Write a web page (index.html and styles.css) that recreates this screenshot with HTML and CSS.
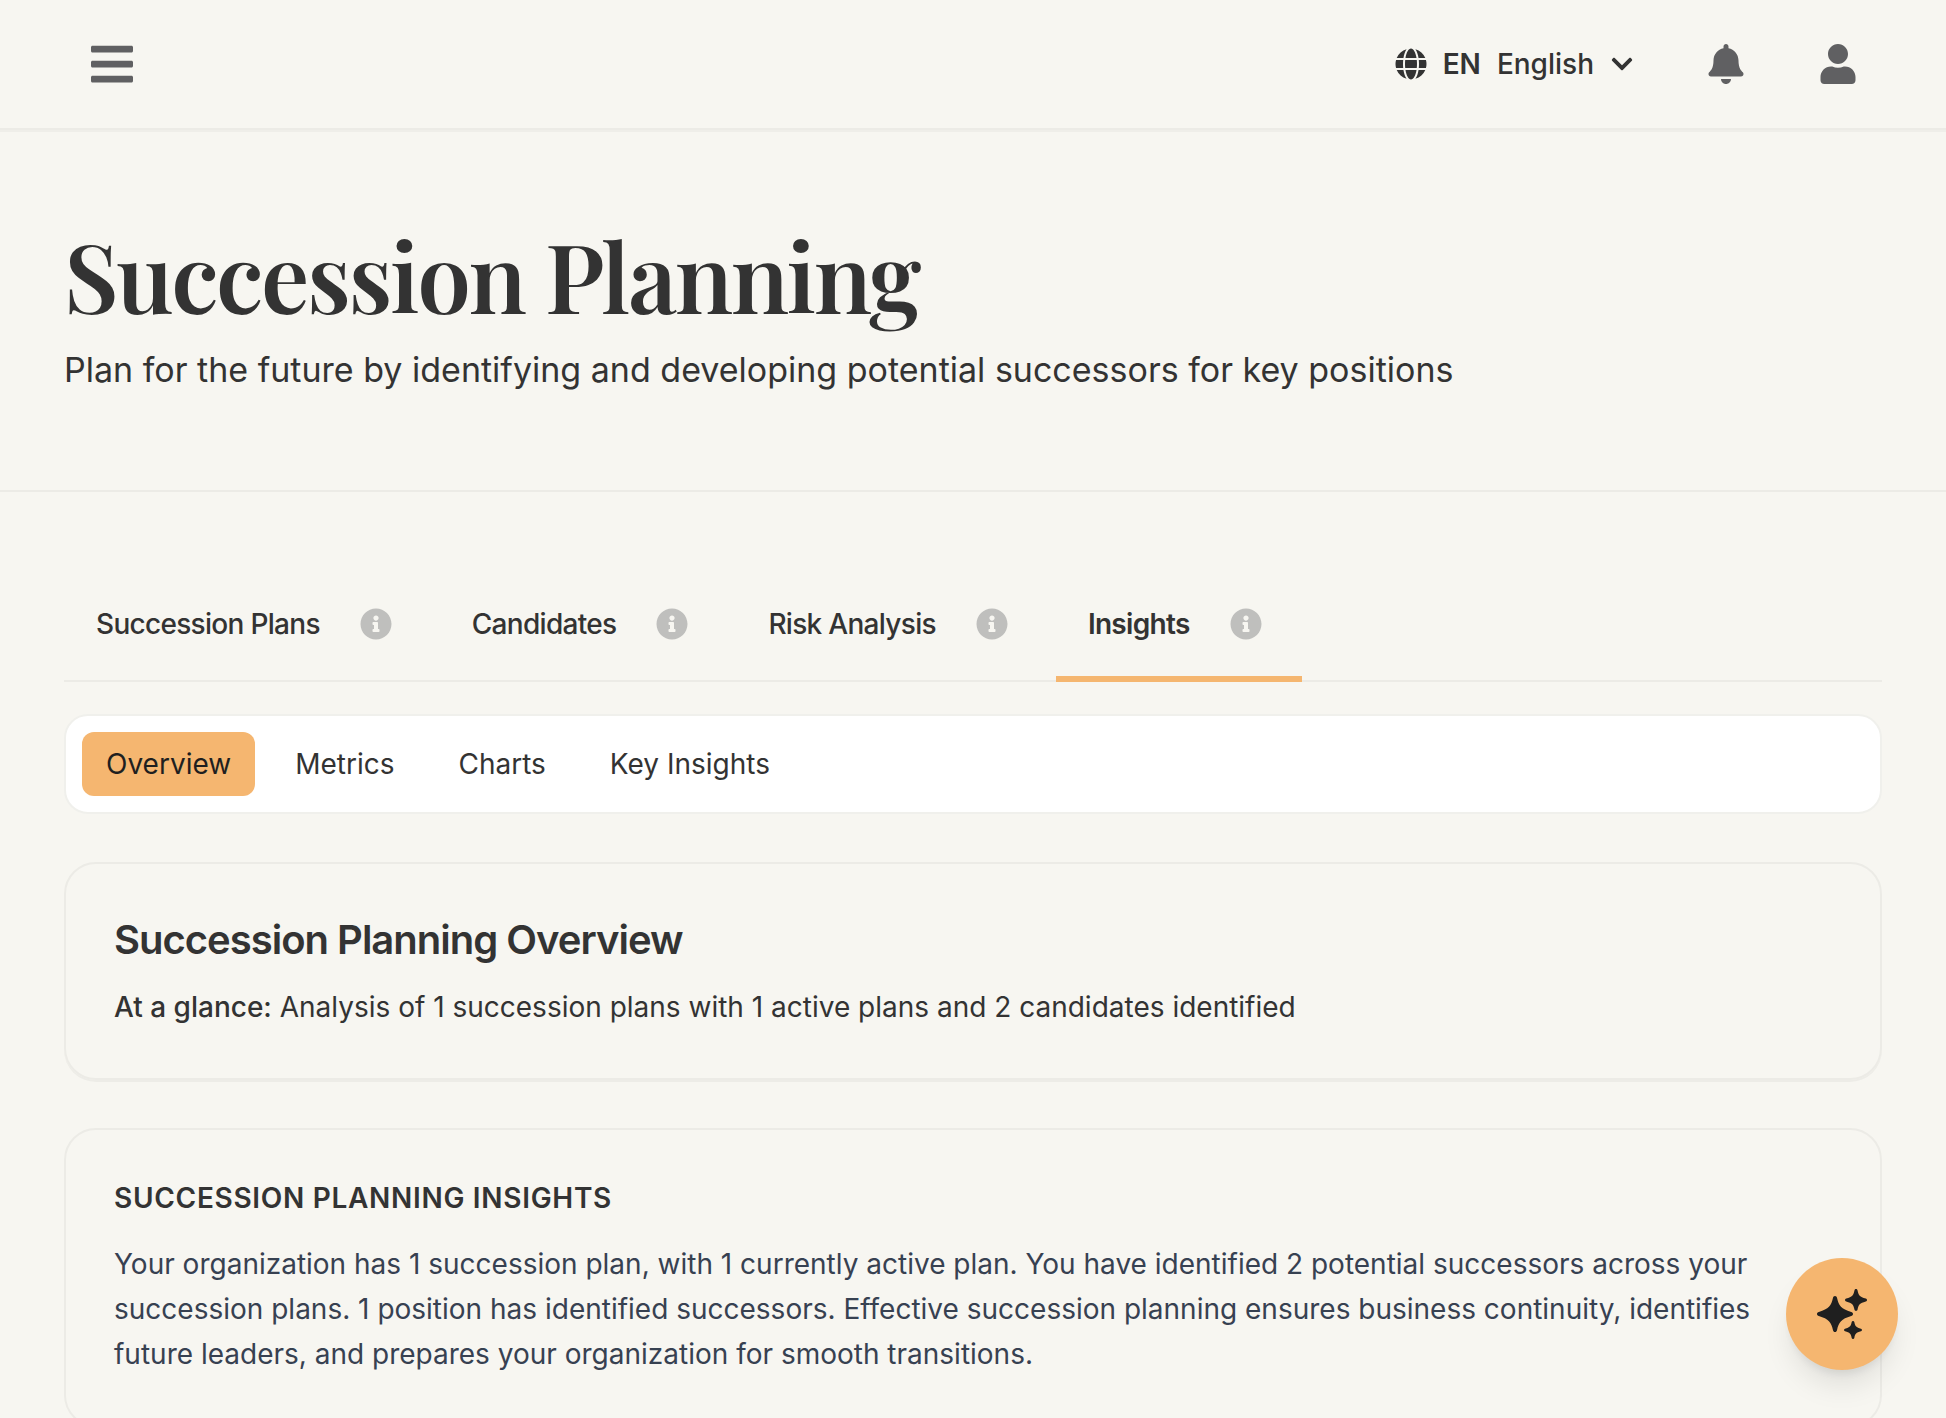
FILE: index.html
```html
<!DOCTYPE html>
<html lang="en">
<head>
<meta charset="utf-8">
<meta name="viewport" content="width=device-width, initial-scale=1">
<title>Succession Planning</title>
<link rel="stylesheet" href="styles.css">
</head>
<body>
<svg class="sprite" aria-hidden="true">
  <symbol id="info" viewBox="0 0 512 512"><path d="M256 8C119.043 8 8 119.083 8 256c0 136.997 111.043 248 248 248s248-111.003 248-248C504 119.083 392.957 8 256 8zm0 110c23.196 0 42 18.804 42 42s-18.804 42-42 42-42-18.804-42-42 18.804-42 42-42zm56 254c0 6.627-5.373 12-12 12h-88c-6.627 0-12-5.373-12-12v-24c0-6.627 5.373-12 12-12h12v-64h-12c-6.627 0-12-5.373-12-12v-24c0-6.627 5.373-12 12-12h64c6.627 0 12 5.373 12 12v100h12c6.627 0 12 5.373 12 12v24z"/></symbol>
</svg>
<div class="app">
  <header class="topbar">
    <button class="icon-button" type="button" aria-label="Menu">
      <svg class="icon-menu" viewBox="0 0 448 512"><path d="M16 132h416c8.837 0 16-7.163 16-16V76c0-8.837-7.163-16-16-16H16C7.163 60 0 67.163 0 76v40c0 8.837 7.163 16 16 16zm0 160h416c8.837 0 16-7.163 16-16v-40c0-8.837-7.163-16-16-16H16c-8.837 0-16 7.163-16 16v40c0 8.837 7.163 16 16 16zm0 160h416c8.837 0 16-7.163 16-16v-40c0-8.837-7.163-16-16-16H16c-8.837 0-16 7.163-16 16v40c0 8.837 7.163 16 16 16z"/></svg>
    </button>
    <div class="topbar-actions">
      <button class="language" type="button">
        <svg class="icon-globe" viewBox="0 0 496 512"><path d="M336.5 160C322 70.7 287.8 8 248 8s-74 62.7-88.5 152h177zM152 256c0 22.2 1.2 43.5 3.3 64h185.3c2.1-20.5 3.3-41.8 3.3-64s-1.2-43.5-3.3-64H155.3c-2.1 20.5-3.3 41.8-3.3 64zm324.7-96c-28.6-67.9-86.5-120.4-158-141.6 24.4 33.8 41.2 84.7 50 141.6h108zM177.2 18.4C105.8 39.6 47.8 92.1 19.3 160h108c8.7-56.9 25.5-107.8 49.9-141.6zM487.4 192H372.7c2.1 21 3.3 42.5 3.3 64s-1.2 43-3.3 64h114.6c5.5-20.5 8.6-41.8 8.6-64s-3.1-43.5-8.5-64zM120 256c0-21.5 1.2-43 3.3-64H8.6C3.2 212.5 0 233.8 0 256s3.2 43.5 8.6 64h114.6c-2-21-3.2-42.5-3.2-64zm39.5 96c14.5 89.3 48.7 152 88.5 152s74-62.7 88.5-152h-177zm159.3 141.6c71.4-21.2 129.4-73.7 158-141.6h-108c-8.8 56.9-25.6 107.8-50 141.6zM19.3 352c28.6 67.9 86.5 120.4 158 141.6-24.4-33.8-41.2-84.7-50-141.6h-108z"/></svg>
        <span class="language-code">EN</span>
        <span>English</span>
        <svg class="icon-chevron" viewBox="0 0 448 512"><path d="M207.029 381.476L12.686 187.132c-9.373-9.373-9.373-24.569 0-33.941l22.667-22.667c9.357-9.357 24.522-9.375 33.901-.04L224 284.505l154.745-154.021c9.379-9.335 24.544-9.317 33.901.04l22.667 22.667c9.373 9.373 9.373 24.569 0 33.941L240.971 381.476c-9.373 9.372-24.569 9.372-33.942 0z"/></svg>
      </button>
      <button class="icon-button" type="button" aria-label="Notifications">
        <svg class="icon-action" viewBox="0 0 448 512"><path d="M224 512c35.32 0 63.97-28.65 63.97-64H160.03c0 35.35 28.65 64 63.97 64zm215.39-149.71c-19.32-20.76-55.47-51.99-55.47-154.29 0-77.7-54.48-139.9-127.94-155.16V32c0-17.67-14.32-32-31.98-32s-31.98 14.33-31.98 32v20.84C118.56 68.1 64.08 130.3 64.08 208c0 102.3-36.15 133.53-55.47 154.29-6 6.45-8.66 14.16-8.61 21.71.11 16.4 12.98 32 32.1 32h383.8c19.12 0 32-15.6 32.1-32 .05-7.55-2.61-15.27-8.61-21.71z"/></svg>
      </button>
      <button class="icon-button" type="button" aria-label="Account">
        <svg class="icon-action" viewBox="0 0 448 512"><path d="M224 256c70.7 0 128-57.3 128-128S294.7 0 224 0 96 57.3 96 128s57.3 128 128 128zm89.6 32h-16.7c-22.2 10.2-46.9 16-72.9 16s-50.6-5.8-72.9-16h-16.7C60.2 288 0 348.2 0 422.4V464c0 26.5 21.5 48 48 48h352c26.5 0 48-21.5 48-48v-41.6c0-74.2-60.2-134.4-134.4-134.4z"/></svg>
      </button>
    </div>
  </header>

  <main class="page">
    <section class="hero">
      <h1 class="hero-title">Succession Planning</h1>
      <p class="hero-text">Plan for the future by identifying and developing potential successors for key positions</p>
    </section>

    <div class="content">
      <nav class="tabs" aria-label="Sections">
        <div class="tab"><button class="tab-button" type="button">Succession Plans</button><button class="tab-info" type="button" aria-label="About Succession Plans"><svg class="icon-info"><use href="#info"/></svg></button></div>
        <div class="tab"><button class="tab-button" type="button">Candidates</button><button class="tab-info" type="button" aria-label="About Candidates"><svg class="icon-info"><use href="#info"/></svg></button></div>
        <div class="tab"><button class="tab-button" type="button">Risk Analysis</button><button class="tab-info" type="button" aria-label="About Risk Analysis"><svg class="icon-info"><use href="#info"/></svg></button></div>
        <div class="tab tab-active"><button class="tab-button" type="button" aria-current="page">Insights</button><button class="tab-info" type="button" aria-label="About Insights"><svg class="icon-info"><use href="#info"/></svg></button></div>
      </nav>

      <nav class="subnav" aria-label="Insights views">
        <button class="pill pill-active" type="button" aria-current="true">Overview</button>
        <button class="pill" type="button">Metrics</button>
        <button class="pill" type="button">Charts</button>
        <button class="pill" type="button">Key Insights</button>
      </nav>

      <section class="card card-raised">
        <h2 class="card-title">Succession Planning Overview</h2>
        <p class="card-text"><strong class="lead">At a glance:</strong> Analysis of 1 succession plans with 1 active plans and 2 candidates identified</p>
      </section>

      <section class="card">
        <h3 class="card-label">Succession Planning Insights</h3>
        <p class="card-text card-text-slate">Your organization has 1 succession plan, with 1 currently active plan. You have identified 2 potential successors across your succession plans. 1 position has identified successors. Effective succession planning ensures business continuity, identifies future leaders, and prepares your organization for smooth transitions.</p>
      </section>
    </div>
  </main>

  <button class="assistant" type="button" aria-label="Open assistant">
    <svg class="icon-sparkles" viewBox="-1 0 52 52"><path d="M18 8c1.100 0 1.700.700 2 1.800 1.800 8.200 4.200 11.200 14.200 14.200 1.100.400 1.800 1 1.800 2s-.700 1.600-1.800 2c-10 3-12.400 6-14.200 14.200-.300 1.100-.900 1.800-2 1.800s-1.700-.700-2-1.800C14.200 34 11.800 31 1.800 28 .700 27.600 0 27 0 26s.700-1.600 1.800-2c10-3 12.400-6 14.200-14.200.300-1.100.900-1.800 2-1.800z"/><path d="M39 1c.800 0 1.300.500 1.500 1.200 1.100 5.200 2.100 6.600 8.300 8.300.800.200 1.200.700 1.200 1.500s-.400 1.300-1.200 1.500c-6.200 1.700-7.200 3.100-8.300 8.300-.200.700-.700 1.200-1.500 1.200s-1.300-.500-1.500-1.200c-1.100-5.200-2.100-6.600-8.300-8.300-.800-.200-1.200-.700-1.200-1.500s.400-1.300 1.200-1.500c6.200-1.700 7.200-3.100 8.300-8.300.200-.700.700-1.200 1.500-1.200z"/><path d="M36 33c.700 0 1.100.400 1.300 1 .900 4.300 1.800 5.300 6.700 6.700.600.200 1 .600 1 1.300s-.400 1.100-1 1.300c-4.900 1.400-5.800 2.400-6.700 6.700-.200.600-.600 1-1.300 1s-1.100-.400-1.300-1c-.900-4.300-1.800-5.300-6.700-6.700-.600-.200-1-.600-1-1.300s.400-1.100 1-1.300c4.900-1.400 5.800-2.400 6.700-6.700.200-.600.600-1 1.300-1z"/></svg>
  </button>
</div>
</body>
</html>
```
FILE: styles.css
```css
:root {
  --surface: #f7f6f1;
  --line: #ecebe6;
  --ink: #333333;
  --accent: #f5b670;
}

* {
  box-sizing: border-box;
}

body {
  margin: 0;
  background: var(--surface);
  color: var(--ink);
  font-family: Inter, "Liberation Sans", sans-serif;
  font-size: 28px;
  line-height: 40px;
}

h1, h2, h3, p {
  margin: 0;
}

button {
  padding: 0;
  border: 0;
  background: none;
  color: inherit;
  font: inherit;
  cursor: pointer;
}

svg {
  display: block;
  fill: currentColor;
}

.sprite {
  display: none;
}

.app {
  display: flex;
  flex-direction: column;
  height: 100vh;
}

.topbar {
  flex: none;
  display: flex;
  align-items: center;
  justify-content: space-between;
  position: relative;
  padding: 20px 64px;
  border-bottom: 2px solid var(--line);
  box-shadow: 0 2px 0 rgba(0, 0, 0, 0.03);
}

.topbar-actions {
  display: flex;
  align-items: center;
  gap: 24px;
}

.icon-button {
  padding: 24px;
  color: #606062;
}

.icon-menu {
  width: 48px;
  height: 48px;
  margin: -4px 0;
}

.icon-action {
  width: 40px;
  height: 40px;
}

.language {
  display: flex;
  align-items: center;
  gap: 16px;
  padding: 24px;
  font-weight: 500;
}

.language-code {
  font-weight: 600;
}

.icon-globe {
  width: 32px;
  height: 32px;
}

.icon-chevron {
  width: 24px;
  height: 24px;
}

.page {
  flex: 1;
  min-height: 0;
  overflow-y: auto;
  scrollbar-width: none;
}

.hero {
  padding: 96px 64px;
  border-bottom: 2px solid var(--line);
}

.hero-title {
  font-family: "Playfair Display", "Liberation Serif", serif;
  font-size: 96px;
  font-weight: 600;
  line-height: 96px;
  letter-spacing: -0.025em;
}

.hero-text {
  margin-top: 24px;
  font-size: 34px;
  line-height: 48px;
}

.content {
  padding: 80px 64px;
}

.tabs {
  display: flex;
  gap: 8px;
  border-bottom: 2px solid var(--line);
}

.tab {
  display: flex;
  align-items: center;
  gap: 32px;
  margin-bottom: -2px;
  padding: 28px 32px;
  border-bottom: 6px solid transparent;
  font-weight: 500;
}

.tab-active {
  border-bottom-color: var(--accent);
  font-weight: 600;
}

.tab-button {
  letter-spacing: -0.025em;
}

.tab-info {
  padding: 8px;
  color: #bfbfbd;
}

.icon-info {
  width: 32px;
  height: 32px;
}

.subnav {
  display: flex;
  gap: 16px;
  margin-top: 32px;
  padding: 16px;
  border: 2px solid #f0f0ec;
  border-radius: 24px;
  background: #ffffff;
}

.pill {
  padding: 12px 24px;
  border-radius: 12px;
}

.pill-active {
  background: var(--accent);
  color: #1f1f1f;
}

.card {
  margin-top: 48px;
  padding: 48px;
  border: 2px solid var(--line);
  border-radius: 32px;
}

.card-raised {
  box-shadow: 0 2px 0 rgba(0, 0, 0, 0.04);
}

.card-title {
  font-size: 40px;
  font-weight: 600;
  line-height: 56px;
  letter-spacing: -0.025em;
}

.card-label {
  font-size: 28px;
  font-weight: 600;
  letter-spacing: 0.025em;
  text-transform: uppercase;
}

.card-text {
  margin-top: 16px;
  line-height: 46px;
}

.card-text-slate {
  margin-top: 24px;
  color: #374151;
  line-height: 45px;
}

.lead {
  font-weight: 500;
}

.assistant {
  position: fixed;
  right: 48px;
  bottom: 48px;
  display: grid;
  place-items: center;
  width: 112px;
  height: 112px;
  border-radius: 50%;
  background: var(--accent);
  color: #1f1f1f;
  box-shadow: 0 20px 30px -6px rgba(0, 0, 0, 0.1), 0 8px 12px -6px rgba(0, 0, 0, 0.1);
}

.icon-sparkles {
  width: 52px;
  height: 52px;
}
```
